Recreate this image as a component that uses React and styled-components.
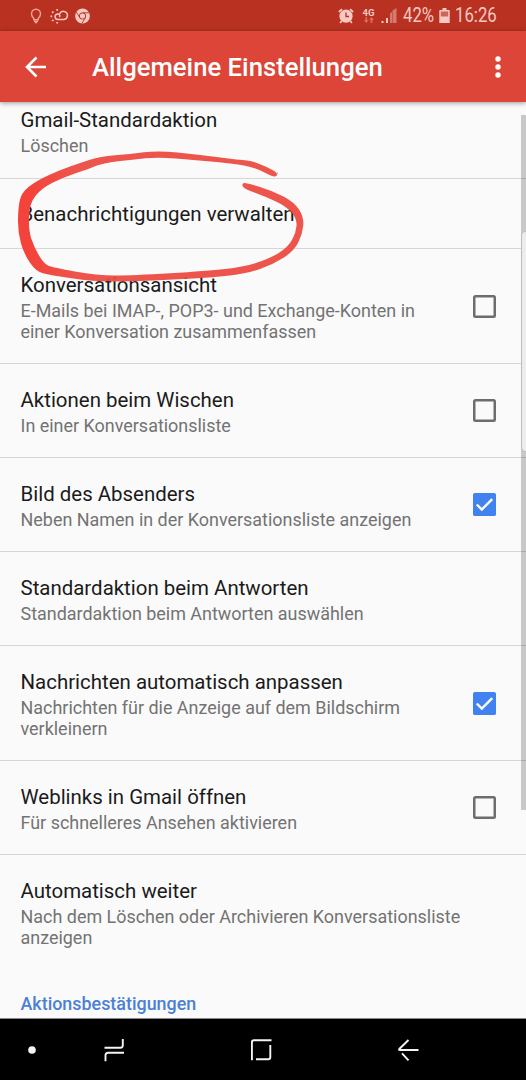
import React from "react";
import styled, { createGlobalStyle } from "styled-components";

const GlobalStyle = createGlobalStyle`
  * {
    box-sizing: border-box;
  }

  body {
    margin: 0;
    background: #fafafa;
    font-family: Roboto, "Liberation Sans", sans-serif;
  }
`;

const Phone = styled.div`
  position: relative;
  display: flex;
  flex-direction: column;
  width: 526px;
  height: 1080px;
  overflow: hidden;
  background: #fafafa;
`;

const StatusBar = styled.div`
  display: flex;
  justify-content: space-between;
  flex: none;
  height: 31px;
  padding: 0 28.5px 0 29px;
  background: #b93221;
  color: #f8c9c2;
`;

const StatusGroup = styled.div`
  display: flex;
  align-items: center;
  height: 31px;
`;

const StatusIcon = styled.svg`
  display: block;
  flex: none;
  margin-left: ${(props) => props.$gap || 0}px;
`;

const StatusText = styled.span`
  flex: none;
  width: ${(props) => props.$width}px;
  margin-left: ${(props) => props.$gap}px;
  font-size: 19.5px;
  line-height: 33px;
  white-space: nowrap;
  transform: scaleX(0.86);
  transform-origin: left;
`;

const Network = styled.span`
  display: flex;
  flex-direction: column;
  align-items: center;
  width: 14px;
  margin-left: 8px;
  font-size: 9.5px;
  font-weight: 700;
  line-height: 9px;
`;

const AppBar = styled.header`
  position: relative;
  z-index: 1;
  display: flex;
  align-items: center;
  flex: none;
  height: 71px;
  padding: 0 24px 0 25px;
  background: #dc4538;
  color: #fff;
  box-shadow: 0 1px 5px rgba(0, 0, 0, 0.4);
`;

const Heading = styled.h1`
  flex: 1;
  margin: 1px 0 0 45px;
  font-size: 25.7px;
  font-weight: 500;
  line-height: 30px;
  white-space: nowrap;
`;

const List = styled.main`
  flex: 1;
  min-height: 0;
  overflow: hidden;
`;

const Row = styled.div`
  display: flex;
  align-items: center;
  justify-content: space-between;
  height: ${(props) => props.$height}px;
  margin-top: ${(props) => (props.$scrolled ? "-18px" : "0")};
  padding: 0 30px 0 20.5px;
  border-bottom: ${(props) => (props.$last ? "none" : "1px solid #d6d6d6")};
`;

const Label = styled.div`
  padding-top: ${(props) => (props.$double ? "2px" : "1px")};
`;

const Title = styled.div`
  color: #1b1b1b;
  font-size: 20.45px;
  line-height: 24px;
  white-space: nowrap;
`;

const Summary = styled.div`
  margin-top: 3px;
  color: #737373;
  font-size: 17.95px;
  line-height: 21px;
  white-space: pre;
`;

const Box = styled.span`
  display: flex;
  align-items: center;
  justify-content: center;
  flex: none;
  width: 23px;
  height: 23px;
  border-radius: 2.5px;
  background: ${(props) => (props.$checked ? "#4182f0" : "transparent")};
  box-shadow: inset 0 0 0 2.5px ${(props) => (props.$checked ? "#4182f0" : "#6d6d6d")};
`;

const Category = styled.div`
  padding: 23px 0 0 20.5px;
  color: #4a80d6;
  font-size: 17.9px;
  font-weight: 500;
  line-height: 21px;
`;

const NavBar = styled.nav`
  display: flex;
  align-items: center;
  flex: none;
  height: 62px;
  border-top: 1px solid #8a8a8a;
  background: #000;
`;

const NavIcon = styled.svg`
  display: block;
  flex: none;
  margin-left: ${(props) => props.$gap}px;
`;

const Scrollbar = styled.div`
  position: absolute;
  top: 115px;
  right: 0;
  width: 5px;
  height: 695px;
  background: rgba(0, 0, 0, 0.2);
`;

const EdgeHandle = styled.div`
  position: absolute;
  top: 231px;
  right: -4px;
  width: 9px;
  height: 221px;
  border: 1px solid #bcbcbc;
  border-radius: 4px;
  background: #ececec;
`;

const Marker = styled.svg`
  position: absolute;
  top: 0;
  left: 0;
  pointer-events: none;
`;

const settings = [
  { title: "Gmail-Standardaktion", summary: "Löschen", height: 95, scrolled: true },
  { title: "Benachrichtigungen verwalten", height: 70 },
  {
    title: "Konversationsansicht",
    summary: "E-Mails bei IMAP-, POP3- und Exchange-Konten in\neiner Konversation zusammenfassen",
    height: 115,
    checked: false,
  },
  { title: "Aktionen beim Wischen", summary: "In einer Konversationsliste", height: 94, checked: false },
  {
    title: "Bild des Absenders",
    summary: "Neben Namen in der Konversationsliste anzeigen",
    height: 94,
    checked: true,
  },
  {
    title: "Standardaktion beim Antworten",
    summary: "Standardaktion beim Antworten auswählen",
    height: 94,
  },
  {
    title: "Nachrichten automatisch anpassen",
    summary: "Nachrichten für die Anzeige auf dem Bildschirm\nverkleinern",
    height: 115,
    checked: true,
  },
  { title: "Weblinks in Gmail öffnen", summary: "Für schnelleres Ansehen aktivieren", height: 94, checked: false },
  {
    title: "Automatisch weiter",
    summary: "Nach dem Löschen oder Archivieren Konversationsliste\nanzeigen",
    height: 115,
    last: true,
  },
];

// outline of the pen stroke, outer edge first and then back along the inner edge
const stroke = [
  [278, 171], [276, 175], [277, 172], [254, 161], [240, 160], [197, 154.5], [158, 150.5], [130, 154], [100, 156.5],
  [80, 163], [60, 170], [36, 181], [21, 193], [18, 210], [18, 233], [24, 254], [36, 271.5], [50, 275],
  [93, 281.5], [133, 281.5], [173, 279.5], [213, 277.5], [247, 273.5], [273, 264.5], [294, 251], [302.5, 234],
  [304, 217], [294, 202], [273, 191], [247, 183], [242, 183], [243, 188.5], [267, 197], [287, 207],
  [297, 219], [296, 233], [288, 247], [270, 258.5], [243, 267], [207, 271], [133, 275.5], [97, 275.5],
  [53, 267.5], [44, 264], [34, 247], [28.5, 230], [29.5, 203], [42, 188], [63, 177.5], [87, 169.5], [103, 163],
  [133, 159.5], [158, 157], [193, 160], [250, 165], [273, 177], [277, 176],
];

function smooth(points) {
  const mid = (a, b) => `${(a[0] + b[0]) / 2} ${(a[1] + b[1]) / 2}`;
  const n = points.length;
  const parts = points.map((p, i) => `Q${p[0]} ${p[1]} ${mid(p, points[(i + 1) % n])}`);
  return `M${mid(points[n - 1], points[0])}${parts.join("")}Z`;
}

function Check() {
  return (
    <svg width="19" height="19" viewBox="0 0 19 19" fill="none">
      <path d="M1.8 9.5 L6.8 14.5 L17.2 4.1" stroke="#fff" strokeWidth="2.4" />
    </svg>
  );
}

function Status() {
  return (
    <StatusBar>
      <StatusGroup>
        <StatusIcon width="14" height="16" viewBox="0 0 14 16" fill="none" stroke="#f0a598" strokeWidth="1.4">
          <path d="M4.8 10.3C3.5 9.2 2.5 7.8 2.5 5.7a4.5 4.5 0 0 1 9 0c0 2.1-1 3.5-2.3 4.6v1.5H4.8z" />
          <path d="M5 13.3h4M5.8 14.6h2.4" />
        </StatusIcon>
        <StatusIcon $gap={7} width="19" height="16" viewBox="0 0 19 16" fill="none" stroke="#f8c9c2" strokeWidth="1.5">
          <path d="M9.3 9 C10.6 7.8 9.6 6 7.9 6a2.8 2.8 0 0 0 0 5.6H13.3a4.1 4.1 0 1 0-3.6-6" />
          <path d="M.5 8.3h1.7M2.2 3.6l1.2 1.2M7.2 1v1.7M2.2 13l1.2-1.2M7.2 15.5v-1.6" strokeWidth="1.7" />
        </StatusIcon>
        <StatusIcon $gap={5.5} width="15" height="16" viewBox="0 0 15 16" fill="none">
          <circle cx="7.5" cy="8" r="7.4" fill="#f8c9c2" />
          <circle cx="7.5" cy="8" r="3.2" stroke="#b93221" strokeWidth="1" />
          <path d="M7.5 4.8h6.6M4.7 9.6 1.3 4M10.3 9.6 7 15.3" stroke="#b93221" strokeWidth=".9" />
        </StatusIcon>
      </StatusGroup>
      <StatusGroup>
        <StatusIcon width="16" height="16" viewBox="0 0 16 16" fill="none">
          <circle cx="8" cy="8.2" r="6.6" fill="#f8c9c2" />
          <path d="M.9 4 4 1.2M15.1 4 12 1.2M3.6 13l-1.4 2M12.4 13l1.4 2" stroke="#f8c9c2" strokeWidth="1.7" />
          <path d="M8 4.5v4h3" stroke="#b93221" strokeWidth="1.3" />
        </StatusIcon>
        <Network>
          4G
          <svg width="10" height="6" viewBox="0 0 10 6" fill="#d9705f">
            <path d="M2.3 6 0 3h1.5V0h1.6v3h1.5zM7.5 0l2.3 3H8.3v3H6.7V3H5.2z" />
          </svg>
        </Network>
        <StatusIcon $gap={5} width="16" height="16" viewBox="0 0 16 16">
          <path d="M.5 15v-2h2v2zM5 15v-5h2v5z" fill="#f8c9c2" />
          <path d="M9 15V5.5L11 4v11zM11.5 15V2.5L15.5 0v15z" fill="#d57a6d" />
        </StatusIcon>
        <StatusText $gap={6} $width={31}>42%</StatusText>
        <StatusIcon $gap={5} width="11" height="16" viewBox="0 0 11 16">
          <path d="M3.5 0h4v2H10a.7.7 0 0 1 .7.7V15H.3V2.7A.7.7 0 0 1 1 2h2.5z" fill="#f8c9c2" />
          <path d="M1.8 3.5h7.4v5H1.8z" fill="#cb6658" />
        </StatusIcon>
        <StatusText $gap={5} $width={43}>16:26</StatusText>
      </StatusGroup>
    </StatusBar>
  );
}

function Setting({ item }) {
  return (
    <Row $height={item.height} $scrolled={item.scrolled} $last={item.last}>
      <Label $double={Boolean(item.summary)}>
        <Title>{item.title}</Title>
        {item.summary && <Summary>{item.summary}</Summary>}
      </Label>
      {item.checked !== undefined && <Box $checked={item.checked}>{item.checked && <Check />}</Box>}
    </Row>
  );
}

function App() {
  return (
    <>
      <GlobalStyle />
      <Phone>
        <Status />
        <AppBar>
          <svg width="22" height="22" viewBox="0 0 22 22" fill="none" stroke="#fff" strokeWidth="2.6">
            <path d="M21 11H3M11.5 1.5 2 11l9.5 9.5" />
          </svg>
          <Heading>Allgemeine Einstellungen</Heading>
          <svg width="8" height="22" viewBox="0 0 8 22" fill="#fff">
            <circle cx="4" cy="3" r="2.7" />
            <circle cx="4" cy="11" r="2.7" />
            <circle cx="4" cy="19" r="2.7" />
          </svg>
        </AppBar>
        <List>
          {settings.map((item) => (
            <Setting key={item.title} item={item} />
          ))}
          <Category>Aktionsbestätigungen</Category>
        </List>
        <NavBar>
          <NavIcon $gap={27.5} width="8" height="8" viewBox="0 0 8 8">
            <circle cx="4" cy="4" r="3.8" fill="#f4f4f4" />
          </NavIcon>
          <NavIcon $gap={68.5} width="21" height="24" viewBox="0 0 21 24" fill="none" stroke="#f4f4f4" strokeWidth="1.9">
            <path d="M.5 9.7h15.8q2.5 0 2.5-2.5V1M20 14.8H4q-2.5 0-2.5 2.5v6" />
          </NavIcon>
          <NavIcon $gap={126} width="21" height="22" viewBox="0 0 21 22" fill="none" stroke="#f4f4f4" strokeWidth="1.9">
            <path d="M.9 21.3V3.4Q.9 1.2 3 1.2h17.5M19.3 6v12.2q0 2-2 2H5" />
          </NavIcon>
          <NavIcon $gap={126} width="21" height="22" viewBox="0 0 21 22" fill="none" stroke="#f4f4f4" strokeWidth="1.9">
            <path d="M10.5 1 1.3 10q-.8 1 .5 1H20.5M4 14.3l6.5 7" />
          </NavIcon>
        </NavBar>
        <Scrollbar />
        <EdgeHandle />
        <Marker width="526" height="320" viewBox="0 0 526 320">
          <defs>
            <linearGradient id="ink" gradientUnits="userSpaceOnUse" x1="30" y1="0" x2="75" y2="0">
              <stop offset="0" stopColor="#f4433a" />
              <stop offset="1" stopColor="#ec463d" stopOpacity=".92" />
            </linearGradient>
          </defs>
          <path d={smooth(stroke)} fill="url(#ink)" />
        </Marker>
      </Phone>
    </>
  );
}

export default App;
